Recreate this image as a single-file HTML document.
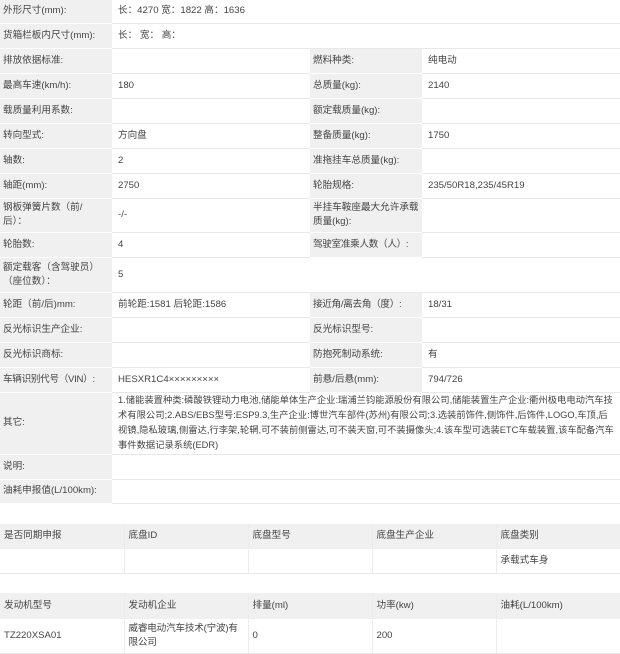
<!DOCTYPE html>
<html><head><meta charset="utf-8"><style>
*{margin:0;padding:0;box-sizing:border-box}
body{width:620px;height:654px;background:#fff;font-family:"Liberation Sans","Noto Sans CJK SC",sans-serif;font-size:9.6px;color:#444;overflow:hidden;position:relative}
table{border-collapse:collapse;table-layout:fixed;width:620px;position:absolute;left:0}
td{border-bottom:1px solid #e8e8e8;padding:0 4px 0 6px;vertical-align:middle;line-height:14px}
td.l{background:#f0f0f0;border-bottom:1px solid #fff}
td.l2{padding-left:3px;padding-right:2px}
.t2 td{padding-left:4px;padding-right:2px}
.h td{background:#f0f0f0;border-bottom:1px solid #fff}
.t2 td+td{border-left:1px solid #ececec}
</style></head><body>
<table style="top:0">
<colgroup><col style="width:112px"><col style="width:198px"><col style="width:112px"><col style="width:198px"></colgroup>
<tr style="height:23px"><td class="l l2">外形尺寸(mm):</td><td colspan="3">长：4270 宽：1822 高：1636</td></tr>
<tr style="height:25px"><td class="l l2">货箱栏板内尺寸(mm):</td><td colspan="3">长： 宽： 高：</td></tr>
<tr style="height:25px"><td class="l l2">排放依据标准:</td><td></td><td class="l l2">燃料种类:</td><td>纯电动</td></tr>
<tr style="height:25px"><td class="l l2">最高车速(km/h):</td><td>180</td><td class="l l2">总质量(kg):</td><td>2140</td></tr>
<tr style="height:25px"><td class="l l2">载质量利用系数:</td><td></td><td class="l l2">额定载质量(kg):</td><td></td></tr>
<tr style="height:25px"><td class="l l2">转向型式:</td><td>方向盘</td><td class="l l2">整备质量(kg):</td><td>1750</td></tr>
<tr style="height:25px"><td class="l l2">轴数:</td><td>2</td><td class="l l2">准拖挂车总质量(kg):</td><td></td></tr>
<tr style="height:25px"><td class="l l2">轴距(mm):</td><td>2750</td><td class="l l2">轮胎规格:</td><td>235/50R18,235/45R19</td></tr>
<tr style="height:34px"><td class="l l2">钢板弹簧片数（前/<br>后）：</td><td>-/-</td><td class="l l2">半挂车鞍座最大允许承载质量(kg):</td><td></td></tr>
<tr style="height:25px"><td class="l l2">轮胎数:</td><td>4</td><td class="l l2" style="white-space:nowrap;letter-spacing:-0.3px">驾驶室准乘人数（人）:</td><td></td></tr>
<tr style="height:35px"><td class="l l2">额定载客（含驾驶员）（座位数）：</td><td colspan="3">5</td></tr>
<tr style="height:25px"><td class="l l2">轮距（前/后)mm:</td><td>前轮距:1581 后轮距:1586</td><td class="l l2" style="white-space:nowrap;letter-spacing:-0.3px">接近角/离去角（度）:</td><td>18/31</td></tr>
<tr style="height:25px"><td class="l l2">反光标识生产企业:</td><td></td><td class="l l2">反光标识型号:</td><td></td></tr>
<tr style="height:25px"><td class="l l2">反光标识商标:</td><td></td><td class="l l2">防抱死制动系统:</td><td>有</td></tr>
<tr style="height:25px"><td class="l l2" style="white-space:nowrap;letter-spacing:-0.3px">车辆识别代号（VIN）:</td><td>HESXR1C4×××××××××</td><td class="l l2">前悬/后悬(mm):</td><td>794/726</td></tr>
<tr style="height:62px"><td class="l l2">其它:</td><td colspan="3" style="line-height:15px;padding-right:4px;font-size:9.3px">1.储能装置种类:磷酸铁锂动力电池,储能单体生产企业:瑞浦兰钧能源股份有限公司,储能装置生产企业:衢州极电电动汽车技术有限公司;2.ABS/EBS型号:ESP9.3,生产企业:博世汽车部件(苏州)有限公司;3.选装前饰件,侧饰件,后饰件,LOGO,车顶,后视镜,隐私玻璃,侧雷达,行李架,轮辋,可不装前侧雷达,可不装天窗,可不装摄像头;4.该车型可选装ETC车载装置,该车配备汽车事件数据记录系统(EDR)</td></tr>
<tr style="height:25px"><td class="l l2">说明:</td><td colspan="3"></td></tr>
<tr style="height:24px"><td class="l l2">油耗申报值(L/100km):</td><td colspan="3"></td></tr>
</table>
<table class="t2" style="top:524px">
<tr class="h" style="height:25px"><td>是否同期申报</td><td>底盘ID</td><td>底盘型号</td><td>底盘生产企业</td><td>底盘类别</td></tr>
<tr style="height:24px"><td></td><td></td><td></td><td></td><td>承载式车身</td></tr>
</table>
<table class="t2" style="top:593px">
<tr class="h" style="height:26px"><td>发动机型号</td><td>发动机企业</td><td>排量(ml)</td><td>功率(kw)</td><td>油耗(L/100km)</td></tr>
<tr style="height:34px"><td>TZ220XSA01</td><td style="letter-spacing:-0.2px">威睿电动汽车技术(宁波)有限公司</td><td>0</td><td>200</td><td></td></tr>
</table>
</body></html>
